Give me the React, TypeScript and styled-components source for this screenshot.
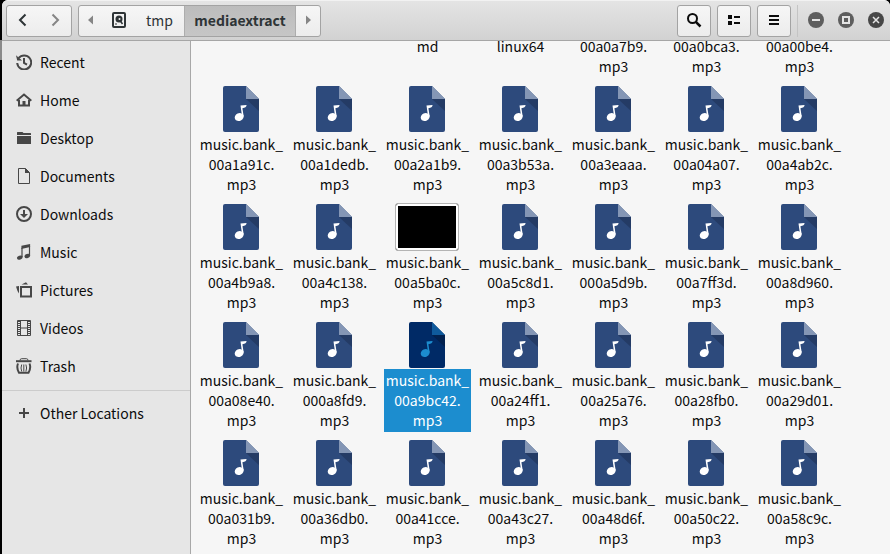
import React from 'react';
import styled, { createGlobalStyle, css } from 'styled-components';

const GlobalStyle = createGlobalStyle`
  *, *::before, *::after { box-sizing: border-box; }
  html, body, #root { height: 100%; }
  body {
    margin: 0;
    background: #000;
    font-family: "Noto Sans CJK SC", "Noto Sans", sans-serif;
    font-size: 14px;
    color: #0c0c0c;
  }
  button { font: inherit; color: inherit; cursor: default; }
`;

const Desktop = styled.div`
  display: flex;
  height: 100vh;
  padding-left: 2px;
  background: linear-gradient(#000 40px, #8a8a8a 40px, #8a8a8a 60px, #000 60px);
  overflow: hidden;
`;

const Window = styled.div`
  flex: 1;
  min-width: 0;
  display: flex;
  flex-direction: column;
  background: #f6f6f6;
  border-radius: 6px 6px 0 0;
  overflow: hidden;
`;

const HeaderBar = styled.header`
  flex: none;
  display: flex;
  align-items: center;
  gap: 6px;
  height: 41px;
  padding: 0 6px 0 4px;
  background: linear-gradient(#e4e4e4, #d2d2d2);
  border-top: 1px solid #f2f2f2;
  border-bottom: 1px solid #a6a6a6;
`;

const raised = css`
  border: 1px solid #a3a3a3;
  border-radius: 3px;
  background: linear-gradient(#f6f6f6, #ececec);
`;

const ButtonGroup = styled.div`
  ${raised}
  display: flex;
  height: 32px;
  overflow: hidden;
`;

const GroupButton = styled.button<{ $width: number; $active?: boolean; $dim?: boolean }>`
  display: flex;
  align-items: center;
  justify-content: center;
  width: ${p => p.$width}px;
  padding: 0 0 2px;
  border: 0;
  background: ${p => (p.$active ? 'linear-gradient(#bcbcbc, #c6c6c6)' : 'none')};
  color: ${p => (p.$dim ? '#858585' : '#2e3436')};
  font-weight: ${p => (p.$active ? 700 : 400)};
  box-shadow: ${p => (p.$active ? 'inset 1px 0 #adadad, inset -1px 0 #adadad' : 'none')};
`;

const ToolButton = styled.button`
  ${raised}
  display: flex;
  align-items: center;
  justify-content: center;
  width: 34px;
  height: 32px;
  padding: 0 0 2px;
`;

const Spacer = styled.div`
  flex: 1;
`;

const WindowControls = styled.div`
  display: flex;
  align-items: center;
  gap: 14px;
  height: 32px;
  padding: 0 0 2px 10px;
  border-left: 1px solid #c4c4c4;
`;

const RoundButton = styled.button<{ $strong?: boolean }>`
  display: flex;
  width: 16px;
  height: 16px;
  padding: 0;
  border: 0;
  border-radius: 50%;
  background: ${p => (p.$strong ? '#474747' : '#5e5e5e')};
`;

const Body = styled.div`
  flex: 1;
  min-height: 0;
  display: flex;
`;

const Sidebar = styled.nav`
  flex: none;
  width: 189px;
  padding-top: 2px;
  background: #e6e6e6;
  border-right: 1px solid #a8a8a8;
`;

const Place = styled.a`
  display: flex;
  align-items: center;
  gap: 8px;
  height: 38px;
  padding-left: 14px;
  color: inherit;
  text-decoration: none;
  line-height: 20px;
`;

const Divider = styled.hr`
  height: 1px;
  margin: 5px 0 3px;
  border: 0;
  background: #cccccc;
`;

const Content = styled.main`
  flex: 1;
  min-width: 0;
  overflow: hidden;
`;

const FileGrid = styled.ul`
  display: grid;
  grid-template-columns: repeat(auto-fill, 87px);
  gap: 7px 6px;
  margin: -6px 0 0;
  padding: 0 42px 0 7px;
  list-style: none;
`;

const FileItem = styled.li`
  display: flex;
  flex-direction: column;
`;

const Thumb = styled.div`
  display: flex;
  align-items: center;
  justify-content: center;
  height: 48px;
  padding-right: 1px;
`;

const VideoPreview = styled.div`
  width: 64px;
  height: 48px;
  border: 1px solid #b4b4b4;
  border-radius: 3px;
  background: #000;
  box-shadow: inset 0 0 0 2px #fff;
`;

const Label = styled.span<{ $selected?: boolean }>`
  padding: 1px 0 2px;
  line-height: 20px;
  text-align: center;
  white-space: pre-line;
  background: ${p => (p.$selected ? '#1c8dcf' : 'transparent')};
  color: ${p => (p.$selected ? '#fff' : 'inherit')};
`;

const AudioIcon = ({ selected }: { selected?: boolean }) => (
  <svg width="36" height="46" viewBox="0 0 36 46" aria-hidden="true">
    <path d="M2 0H23L36 13V44a2 2 0 0 1-2 2H2a2 2 0 0 1-2-2V2a2 2 0 0 1 2-2z" fill={selected ? '#002a66' : '#2d4a7c'} />
    <path d="M23 13H36V25z" fill={selected ? '#02214f' : '#243b65'} />
    <path d="M23 0L36 13H23z" fill={selected ? '#0f5a9c' : '#8496b5'} />
    <g fill={selected ? '#1c8dcf' : '#fff'}>
      <path d="M17.500 19.600L23.600 19Q23.400 21.800 19.400 22.200L20.700 30.500L19 30z" />
      <ellipse cx="16.200" cy="31" rx="4.600" ry="3.900" transform="rotate(-25 16.200 31)" />
    </g>
  </svg>
);

const Glyph = ({ size = 16, children }: { size?: number; children: React.ReactNode }) => (
  <svg width={size} height={size} viewBox="0 0 16 16" fill="none" stroke="currentColor" strokeWidth="2" aria-hidden="true">
    {children}
  </svg>
);

const SideGlyph = styled.span`
  display: flex;
  color: #474747;
`;

const places: { name: string; icon: React.ReactNode }[] = [
  {
    name: 'Recent',
    icon: (
      <>
        <path d="M2.600 4.200A7 7 0 1 1 1.200 9" />
        <path d="M0 1.200L1.200 6.600H6z" fill="currentColor" stroke="none" />
        <path d="M8 4v5l3 1.600" />
      </>
    ),
  },
  {
    name: 'Home',
    icon: (
      <>
        <path d="M.7 8.800L8 2.600l7.300 6.200" />
        <path d="M3 8v5.500h10V8" />
        <path d="M6.500 14V9h3v5z" fill="currentColor" stroke="none" />
      </>
    ),
  },
  {
    name: 'Desktop',
    icon: <path d="M1 6h14v7.500q0 .5-.5.5h-13q-.5 0-.5-.5zM1 5V2.500q0-.5.5-.5h5l1 1h7q.5 0 .5.500V5z" fill="currentColor" stroke="none" />,
  },
  {
    name: 'Documents',
    icon: (
      <>
        <path d="M2.500.5h7l4 4v11h-11z" strokeWidth="1" />
        <path d="M9 0l5 5H9z" fill="currentColor" stroke="none" />
      </>
    ),
  },
  {
    name: 'Downloads',
    icon: (
      <>
        <circle cx="8" cy="8" r="7" />
        <path d="M8 4v5" />
        <path d="M4 8h8l-4 4z" fill="currentColor" stroke="none" />
      </>
    ),
  },
  {
    name: 'Music',
    icon: (
      <>
        <path d="M5.400 1.800L14.100 0v3L5.400 5z" fill="currentColor" stroke="none" />
        <ellipse cx="3.800" cy="13.600" rx="2.900" ry="2" transform="rotate(-20 3.800 13.600)" fill="currentColor" stroke="none" />
        <ellipse cx="11.300" cy="12" rx="2.900" ry="2" transform="rotate(-20 11.300 12)" fill="currentColor" stroke="none" />
        <path d="M6 13V4M13.500 11.500V2" strokeWidth="1.200" />
      </>
    ),
  },
  {
    name: 'Pictures',
    icon: (
      <>
        <path d="M5 5h10v9.500H5z" />
        <path d="M5.500 2.500L10 .2l2 2.300zM0 4.500L3 4v7.500L1.500 9z" fill="currentColor" stroke="none" />
      </>
    ),
  },
  {
    name: 'Videos',
    icon: (
      <>
        <path d="M1.500.5h13v15h-13zM4.500.5v15M11.500.5v15M4.500 8h7" strokeWidth="1" />
        <path d="M3 1v14M13 1v14" strokeWidth="2" strokeDasharray="1 1" />
      </>
    ),
  },
  {
    name: 'Trash',
    icon: (
      <>
        <path d="M4 2.500Q4 .7 5.500.7h5q1.500 0 1.500 1.800" strokeWidth="1" />
        <path d="M0 3.200h15.500" />
        <path d="M2 5.500Q.2 10 3 14.800h9.500Q15.300 10 13.500 5.500" strokeWidth="2" />
        <path d="M5.700 6.500q-1.400 3.500 0 7M7.800 6.500v7M9.900 6.500q1.400 3.500 0 7" strokeWidth="1" />
      </>
    ),
  },
];

type FileEntry = { name: string; kind?: 'video'; selected?: boolean };

const scrolledRow = ['', '', 'md', 'linux64', '00a0a7b9.\nmp3', '00a0bca3.\nmp3', '00a00be4.\nmp3'];

const hashes = [
  '00a1a91c', '00a1dedb', '00a2a1b9', '00a3b53a', '00a3eaaa', '00a04a07', '00a4ab2c',
  '00a4b9a8', '00a4c138', '00a5ba0c', '00a5c8d1', '000a5d9b', '00a7ff3d', '00a8d960',
  '00a08e40', '000a8fd9', '00a9bc42', '00a24ff1', '00a25a76', '00a28fb0', '00a29d01',
  '00a031b9', '00a36db0', '00a41cce', '00a43c27', '00a48d6f', '00a50c22', '00a58c9c',
];

const files: FileEntry[] = hashes.map(h => ({
  name: `music.bank_\n${h}.\nmp3`,
  kind: h === '00a5ba0c' ? 'video' : undefined,
  selected: h === '00a9bc42',
}));

export default function App() {
  return (
    <>
      <GlobalStyle />
      <Desktop>
        <Window>
          <HeaderBar>
            <ButtonGroup>
              <GroupButton $width={32} aria-label="Back">
                <Glyph><path d="M10.500 2.500L5 8l5.500 5.500" /></Glyph>
              </GroupButton>
              <GroupButton $width={32} $dim aria-label="Forward">
                <Glyph><path d="M5.500 2.500L11 8l-5.500 5.500" /></Glyph>
              </GroupButton>
            </ButtonGroup>
            <ButtonGroup>
              <GroupButton $width={24} $dim aria-label="Scroll path left">
                <Glyph><path d="M10 3.500v9L5 8z" fill="currentColor" stroke="none" /></Glyph>
              </GroupButton>
              <GroupButton $width={32} aria-label="File system root">
                <Glyph>
                  <rect x="2" y="1" width="12" height="14" rx="1" />
                  <circle cx="8" cy="7" r="3.500" fill="currentColor" stroke="none" />
                  <path d="M8 7l3.500 5" strokeWidth="1.500" />
                  <circle cx="8.500" cy="7" r="1" fill="#f0f0f0" stroke="none" />
                  <path d="M4 12h2" strokeWidth="1" />
                </Glyph>
              </GroupButton>
              <GroupButton $width={49}>tmp</GroupButton>
              <GroupButton $width={112} $active>mediaextract</GroupButton>
              <GroupButton $width={24} $dim aria-label="Scroll path right">
                <Glyph><path d="M6 3.500v9L11 8z" fill="currentColor" stroke="none" /></Glyph>
              </GroupButton>
            </ButtonGroup>
            <Spacer />
            <ToolButton aria-label="Search">
              <Glyph><circle cx="6.500" cy="6.500" r="4.500" /><path d="M9.800 9.800L14.500 14.500" strokeWidth="2.500" /></Glyph>
            </ToolButton>
            <ToolButton aria-label="List view">
              <Glyph><path d="M2 3h4v4H2zM2 9h4v4H2z" fill="currentColor" stroke="none" /><path d="M8 5h6M8 11h6" /></Glyph>
            </ToolButton>
            <ToolButton aria-label="Menu">
              <Glyph><path d="M3 4h10M3 8h10M3 12h10" /></Glyph>
            </ToolButton>
            <WindowControls>
              <RoundButton aria-label="Minimize">
                <Glyph><path d="M4 8h8" stroke="#e4e4e4" /></Glyph>
              </RoundButton>
              <RoundButton aria-label="Maximize">
                <Glyph><path d="M5 5h6v6H5z" stroke="#e4e4e4" /></Glyph>
              </RoundButton>
              <RoundButton $strong aria-label="Close">
                <Glyph><path d="M5 5l6 6M11 5l-6 6" stroke="#e4e4e4" strokeWidth="1.500" /></Glyph>
              </RoundButton>
            </WindowControls>
          </HeaderBar>
          <Body>
            <Sidebar>
              {places.map(p => (
                <Place key={p.name} href="#">
                  <SideGlyph><Glyph>{p.icon}</Glyph></SideGlyph>
                  {p.name}
                </Place>
              ))}
              <Divider />
              <Place href="#">
                <SideGlyph><Glyph><path d="M8 3v10M3 8h10" /></Glyph></SideGlyph>
                Other Locations
              </Place>
            </Sidebar>
            <Content>
              <FileGrid>
                {scrolledRow.map((name, i) => (
                  <FileItem key={i}>{name && <Label>{name}</Label>}</FileItem>
                ))}
                {files.map(f => (
                  <FileItem key={f.name}>
                    <Thumb>{f.kind === 'video' ? <VideoPreview /> : <AudioIcon selected={f.selected} />}</Thumb>
                    <Label $selected={f.selected}>{f.name}</Label>
                  </FileItem>
                ))}
              </FileGrid>
            </Content>
          </Body>
        </Window>
      </Desktop>
    </>
  );
}
